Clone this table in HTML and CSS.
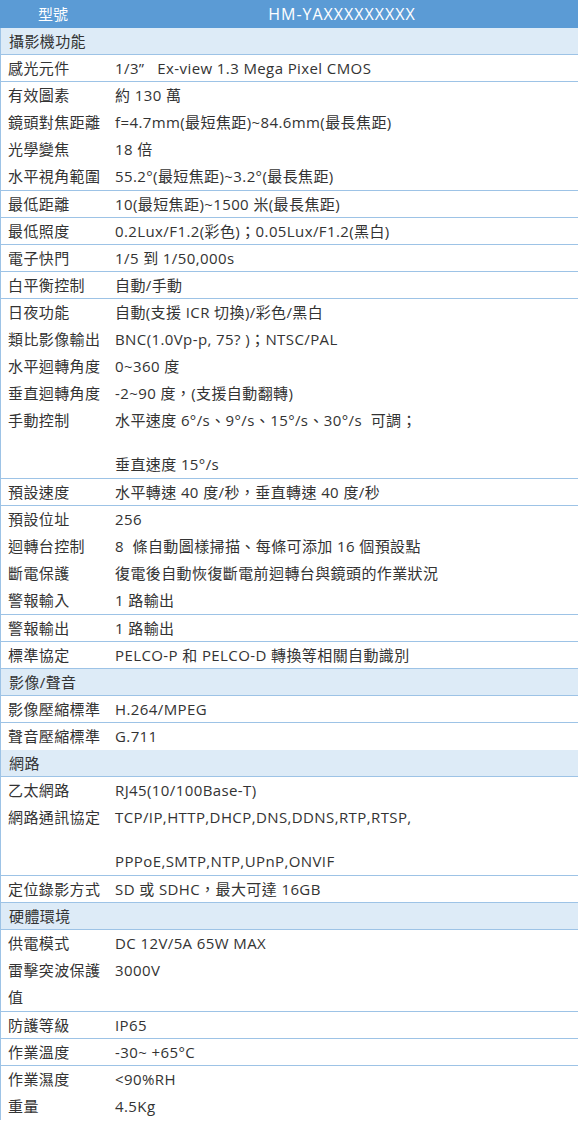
FILE: index.html
```html
<!DOCTYPE html>
<html lang="zh-Hant">
<head>
<meta charset="utf-8">
<title>規格表</title>
<link rel="stylesheet" href="styles.css">
</head>
<body>
<div class="spec">
  <div class="head"><div class="hl">型號</div><div class="hv">HM-YAXXXXXXXXX</div></div>

  <div class="sec b">攝影機功能</div>
  <div class="row b"><div class="k">感光元件</div><div class="v">1/3”&nbsp;&nbsp; Ex-view 1.3 Mega Pixel CMOS</div></div>
  <div class="row"><div class="k">有效圖素</div><div class="v">約 130 萬</div></div>
  <div class="row"><div class="k">鏡頭對焦距離</div><div class="v">f=4.7mm(最短焦距)~84.6mm(最長焦距)</div></div>
  <div class="row"><div class="k">光學變焦</div><div class="v">18 倍</div></div>
  <div class="row b e"><div class="k">水平視角範圍</div><div class="v">55.2°(最短焦距)~3.2°(最長焦距)</div></div>
  <div class="row b"><div class="k">最低距離</div><div class="v">10(最短焦距)~1500 米(最長焦距)</div></div>
  <div class="row b"><div class="k">最低照度</div><div class="v">0.2Lux/F1.2(彩色)；0.05Lux/F1.2(黑白)</div></div>
  <div class="row b"><div class="k">電子快門</div><div class="v">1/5 到 1/50,000s</div></div>
  <div class="row b"><div class="k">白平衡控制</div><div class="v">自動/手動</div></div>
  <div class="row"><div class="k">日夜功能</div><div class="v">自動(支援 ICR 切換)/彩色/黑白</div></div>
  <div class="row"><div class="k">類比影像輸出</div><div class="v">BNC(1.0Vp-p, 75? )；NTSC/PAL</div></div>
  <div class="row"><div class="k">水平迴轉角度</div><div class="v">0~360 度</div></div>
  <div class="row"><div class="k">垂直迴轉角度</div><div class="v">-2~90 度，(支援自動翻轉)</div></div>
  <div class="row tall b e"><div class="k">手動控制</div><div class="v"><p>水平速度 6°/s、9°/s、15°/s、30°/s&nbsp; 可調；</p><p>垂直速度 15°/s</p></div></div>
  <div class="row b"><div class="k">預設速度</div><div class="v">水平轉速 40 度/秒，垂直轉速 40 度/秒</div></div>
  <div class="row"><div class="k">預設位址</div><div class="v">256</div></div>
  <div class="row"><div class="k">迴轉台控制</div><div class="v">8&nbsp; 條自動圖樣掃描、每條可添加 16 個預設點</div></div>
  <div class="row"><div class="k">斷電保護</div><div class="v">復電後自動恢復斷電前迴轉台與鏡頭的作業狀況</div></div>
  <div class="row b e"><div class="k">警報輸入</div><div class="v">1 路輸出</div></div>
  <div class="row b"><div class="k">警報輸出</div><div class="v">1 路輸出</div></div>
  <div class="row b"><div class="k">標準協定</div><div class="v">PELCO-P 和 PELCO-D 轉換等相關自動識別</div></div>

  <div class="sec b">影像/聲音</div>
  <div class="row b"><div class="k">影像壓縮標準</div><div class="v">H.264/MPEG</div></div>
  <div class="row"><div class="k">聲音壓縮標準</div><div class="v">G.711</div></div>

  <div class="sec b">網路</div>
  <div class="row"><div class="k">乙太網路</div><div class="v">RJ45(10/100Base-T)</div></div>
  <div class="row tall b e"><div class="k">網路通訊協定</div><div class="v"><p>TCP/IP,HTTP,DHCP,DNS,DDNS,RTP,RTSP,</p><p>PPPoE,SMTP,NTP,UPnP,ONVIF</p></div></div>
  <div class="row b"><div class="k">定位錄影方式</div><div class="v">SD 或 SDHC，最大可達 16GB</div></div>

  <div class="sec b">硬體環境</div>
  <div class="row"><div class="k">供電模式</div><div class="v">DC 12V/5A 65W MAX</div></div>
  <div class="row wrap b e"><div class="k">雷擊突波保護值</div><div class="v">3000V</div></div>
  <div class="row b"><div class="k">防護等級</div><div class="v">IP65</div></div>
  <div class="row b"><div class="k">作業溫度</div><div class="v">-30~ +65°C</div></div>
  <div class="row"><div class="k">作業濕度</div><div class="v">&lt;90%RH</div></div>
  <div class="row last"><div class="k">重量</div><div class="v">4.5Kg</div></div>
</div>
</body>
</html>
```

FILE: styles.css
```css
html, body {
  margin: 0;
  padding: 0;
  background: #ffffff;
}

body {
  font-family: "Open Sans", "Noto Sans CJK TC", sans-serif;
  font-size: 15px;
  letter-spacing: 0.4px;
  color: #333333;
}

.spec {
  width: 578px;
  display: flex;
  flex-direction: column;
}

.head {
  display: grid;
  grid-template-columns: 106px 1fr;
  height: 28px;
  line-height: 28px;
  background: #5b9bd5;
  color: #ffffff;
  font-size: 15px;
  letter-spacing: 0;
}

.hl, .hv {
  text-align: center;
}

.hv {
  font-size: 16px;
  letter-spacing: 1px;
}

.sec {
  box-sizing: border-box;
  height: 27px;
  line-height: 26px;
  padding-left: 8px;
  background: #ddebf7;
  border-left: 1px solid #9dc3e6;
}

.row {
  box-sizing: border-box;
  display: grid;
  grid-template-columns: 107px 1fr;
  height: 27px;
  line-height: 27px;
  border-left: 1px solid #9dc3e6;
}

.b {
  border-bottom: 1px solid #9dc3e6;
  line-height: 26px;
}

.e {
  height: 28px;
  line-height: 27px;
}

.k {
  padding-left: 7px;
  white-space: nowrap;
}

.v {
  padding-left: 7px;
  white-space: nowrap;
}

.v p {
  margin: 0;
  line-height: 27px;
}

.tall {
  height: 72px;
}

.tall .v {
  display: flex;
  flex-direction: column;
  gap: 17px;
}

.wrap {
  height: 55px;
}

.wrap .k {
  white-space: normal;
  width: 96px;
  line-height: 27px;
}
```
